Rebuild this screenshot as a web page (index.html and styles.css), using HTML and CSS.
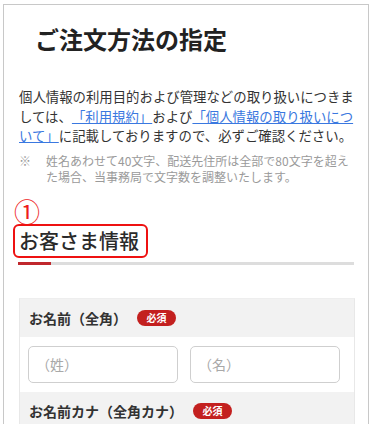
FILE: index.html
```html
<!DOCTYPE html>
<html lang="ja">
<head>
<meta charset="utf-8">
<title>ご注文方法の指定</title>
<link rel="stylesheet" href="styles.css">
</head>
<body>
<div class="page">
  <h1 class="title">ご注文方法の指定</h1>
  <p class="lead">個人情報の利用目的および管理などの取り扱いにつきましては、<a href="#" class="link">「利用規約」</a>および<a href="#" class="link">「個人情報の取り扱いについて」</a>に記載しておりますので、必ずご確認ください。</p>
  <p class="note"><span class="mark">※</span><span class="note-text">姓名あわせて40文字、配送先住所は全部で80文字を超えた場合、当事務局で文字数を調整いたします。</span></p>
  <section class="section">
    <div class="num">①</div>
    <h2 class="sec-title"><span class="sec-box">お客さま情報</span></h2>
    <div class="bar"><span class="bar-accent"></span></div>
    <div class="form">
      <div class="form-head"><span class="label">お名前（全角）</span><span class="req">必須</span></div>
      <div class="form-body">
        <input class="field" type="text" placeholder="（姓）">
        <input class="field" type="text" placeholder="（名）">
      </div>
      <div class="form-head"><span class="label">お名前カナ（全角カナ）</span><span class="req">必須</span></div>
      <div class="form-body">
        <input class="field" type="text" placeholder="（セイ）">
        <input class="field" type="text" placeholder="（メイ）">
      </div>
    </div>
  </section>
</div>
</body>
</html>
```

FILE: styles.css
```css
html, body {
  margin: 0;
  padding: 0;
  background: #ffffff;
}
body {
  font-family: "Noto Sans CJK JP", "Noto Sans", sans-serif;
  color: #333333;
  overflow: hidden;
  height: 424px;
  text-spacing-trim: space-all;
}
.page {
  margin: 4px 0 0 3px;
  width: 366px;
  box-sizing: border-box;
  border: 1px solid #c8c8c8;
  border-bottom: none;
  min-height: 500px;
}
.title {
  margin: 18px 0 0 31px;
  font-size: 24px;
  line-height: 32px;
  font-weight: 700;
  color: #222222;
}
.lead {
  margin: 32px 0 0 15px;
  width: 338px;
  font-size: 13.4px;
  line-height: 19.5px;
  color: #333333;
}
.link {
  color: #3a78e0;
  text-decoration: underline;
  text-underline-offset: 1px;
}
.note {
  margin: 7px 0 0 15px;
  display: flex;
  font-size: 12px;
  line-height: 16px;
  color: #9a9a9a;
}
.mark {
  flex: 0 0 27px;
}
.note-text {
  width: 306px;
}
.num {
  margin: 14px 0 0 10px;
  font-size: 26px;
  line-height: 24px;
  color: #ee1c1c;
}
.sec-title {
  margin: 1px 0 0 9px;
  font-size: 20px;
  line-height: 26px;
  font-weight: 500;
  color: #2a2a2a;
}
.sec-box {
  display: inline-block;
  padding: 2px 7px 2px 4px;
  border: 2px solid #ee1111;
  border-radius: 6px;
}
.bar {
  margin: 4px 0 0 14px;
  width: 336px;
  height: 3px;
  background: #dddddd;
  display: flex;
}
.bar-accent {
  width: 33px;
  background: #c0282d;
}
.form {
  margin: 33px 0 0 15px;
  width: 336px;
  box-sizing: border-box;
  border: 1px solid #e8e8e8;
  border-top-color: #eeeeee;
}
.form-head {
  height: 38px;
  background: #f2f2f2;
  display: flex;
  align-items: center;
  padding-left: 9px;
}
.label {
  font-size: 14px;
  font-weight: 700;
  color: #333333;
}
.req {
  margin-left: 10px;
  display: inline-block;
  height: 16px;
  line-height: 16px;
  padding: 0 9.5px;
  border-radius: 8px;
  background: #c3201f;
  color: #ffffff;
  font-size: 10px;
  font-weight: 700;
}
.form-body {
  display: grid;
  grid-template-columns: 150px 150px;
  column-gap: 12px;
  padding: 9px 13px 9px 8px;
  background: #ffffff;
}
.field {
  height: 37px;
  box-sizing: border-box;
  border: 1px solid #cfcfcf;
  border-radius: 5px;
  padding: 0 7px;
  font-family: "Noto Sans CJK JP", sans-serif;
  font-size: 14px;
  color: #333333;
  background: #ffffff;
  outline: none;
}
.field::placeholder {
  color: #a8a8a8;
}
```
